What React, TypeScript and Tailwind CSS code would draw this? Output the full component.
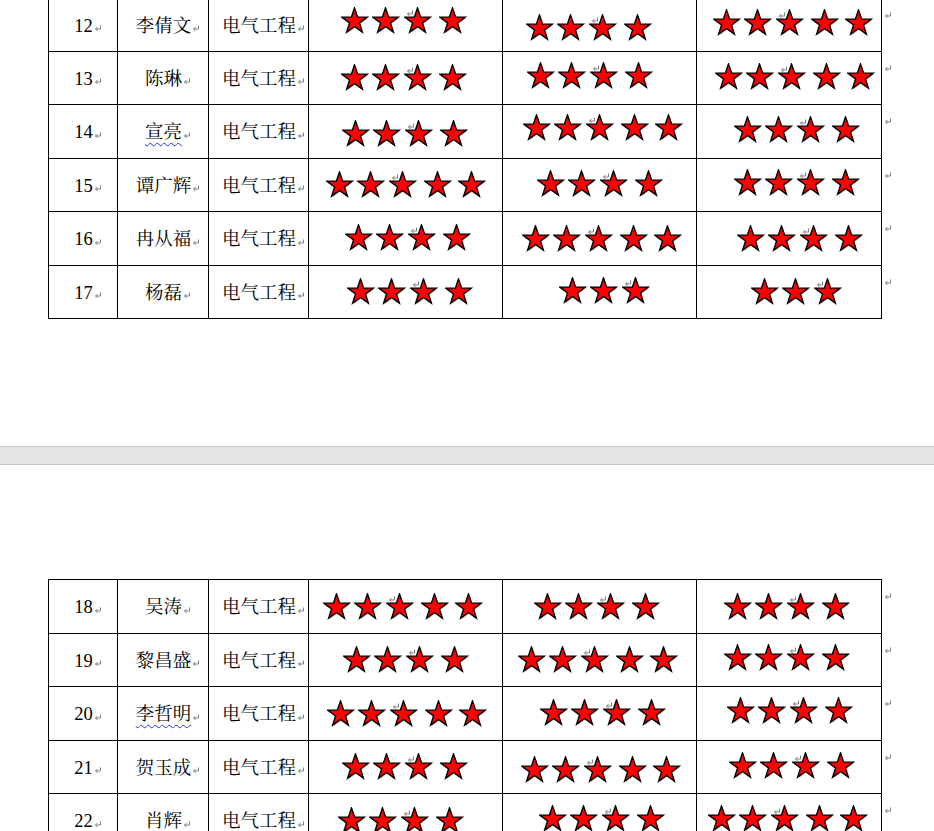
import React from "react";

type StarCell = [number, string, string];
type Row = { no: number; name: string; wavy?: boolean; h: string; cells: StarCell[] };

const TABLE_A: Row[] = [
  { no: 12, name: "李倩文", h: "h-[53px]", cells: [[4, "pl-[32px]", "-mt-[9px]"], [4, "pl-[23px]", "mt-[5px]"], [5, "pl-[16px]", "-mt-[4px]"]] },
  { no: 13, name: "陈琳", h: "h-[53px]", cells: [[4, "pl-[32px]", ""], [4, "pl-[24px]", "-mt-[4px]"], [5, "pl-[18px]", "-mt-[2px]"]] },
  { no: 14, name: "宣亮", wavy: true, h: "h-[54px]", cells: [[4, "pl-[33px]", "mt-[4px]"], [5, "pl-[20px]", "-mt-[8px]"], [4, "pl-[37px]", "-mt-[4px]"]] },
  { no: 15, name: "谭广辉", h: "h-[53px]", cells: [[5, "pl-[17px]", ""], [4, "pl-[34px]", "-mt-[2px]"], [4, "pl-[37px]", "-mt-[4px]"]] },
  { no: 16, name: "冉从福", h: "h-[54px]", cells: [[4, "pl-[36px]", "-mt-[2px]"], [5, "pl-[19px]", ""], [4, "pl-[40px]", ""]] },
  { no: 17, name: "杨磊", h: "h-[53px]", cells: [[4, "pl-[38px]", ""], [3, "pl-[56px]", "-mt-[2px]"], [3, "pl-[54px]", ""]] },
];

const TABLE_B: Row[] = [
  { no: 18, name: "吴涛", h: "h-[54px]", cells: [[5, "pl-[14px]", ""], [4, "pl-[31px]", ""], [4, "pl-[27px]", ""]] },
  { no: 19, name: "黎昌盛", h: "h-[53px]", cells: [[4, "pl-[34px]", ""], [5, "pl-[15px]", ""], [4, "pl-[27px]", "-mt-[4px]"]] },
  { no: 20, name: "李哲明", wavy: true, h: "h-[54px]", cells: [[5, "pl-[18px]", ""], [4, "pl-[37px]", "-mt-[2px]"], [4, "pl-[30px]", "-mt-[6px]"]] },
  { no: 21, name: "贺玉成", h: "h-[53px]", cells: [[4, "pl-[33px]", ""], [5, "pl-[18px]", "mt-[5px]"], [4, "pl-[32px]", "-mt-[2px]"]] },
  { no: 22, name: "肖辉", h: "h-[54px]", cells: [[4, "pl-[29px]", ""], [4, "pl-[36px]", "-mt-[4px]"], [5, "pl-[11px]", "-mt-[4px]"]] },
];

// spacing between stars, same pattern in every cell
const GAPS = ["", "ml-[3px]", "ml-[4px]", "ml-[7px]", "ml-[6px]"];
const STAR_W = ["w-[194px]", "w-[194px]", "w-[185px]"];

function starPoints(cx: number, cy: number, R: number, r: number) {
  const pts: string[] = [];
  for (let i = 0; i < 10; i++) {
    const a = ((-90 + 36 * i) * Math.PI) / 180;
    const rad = i % 2 === 0 ? R : r;
    pts.push(`${(cx + rad * Math.cos(a)).toFixed(2)},${(cy + rad * Math.sin(a)).toFixed(2)}`);
  }
  return pts.join(" ");
}

const PTS = starPoints(13.5, 14.3, 13.4, 5.2);

function Star() {
  return (
    <svg width="28" height="28" viewBox="0 0 28 28" className="block">
      <polygon points={PTS} transform="translate(1 1.2)" fill="#8c8c8c" opacity="0.55" />
      <polygon points={PTS} fill="#ff0000" stroke="#000" strokeWidth="1.4" strokeLinejoin="miter" />
    </svg>
  );
}

function Mark({ className = "" }: { className?: string }) {
  return (
    <svg width="8" height="7" viewBox="0 0 8 7" className={className}>
      <path d="M6.5 0.5V4H1.5M3.5 2L1.5 4L3.5 6" fill="none" stroke="#808080" strokeWidth="1" />
    </svg>
  );
}

function TextCell({ w, children }: { w: string; children: React.ReactNode }) {
  return (
    <div className={`flex items-center justify-center border-r border-black pl-[10px] ${w}`}>
      <span className="mt-[2px] flex items-center whitespace-nowrap text-[18.5px] leading-none text-black">
        {children}
        <Mark className="ml-[1px] mt-[5px]" />
      </span>
    </div>
  );
}

function TableRow({ row }: { row: Row }) {
  return (
    <div className={`relative flex border-b border-black ${row.h}`}>
      <TextCell w="w-[69px]">{row.no}</TextCell>
      <TextCell w="w-[91px]">
        <span className={row.wavy ? "underline decoration-wavy decoration-[#2233ee] decoration-1 underline-offset-[4px]" : ""}>
          {row.name}
        </span>
      </TextCell>
      <TextCell w="w-[100px]">电气工程</TextCell>
      {row.cells.map(([n, pad, mt], ci) => (
        <div key={ci} className={`flex items-center border-r border-black ${STAR_W[ci]} ${pad}`}>
          <div className={`flex ${mt}`}>
            {Array.from({ length: n }).map((_, i) => (
              <div key={i} className={`relative ${GAPS[i]}`}>
                {i === 2 && <Mark className="absolute left-[2px] top-[3px]" />}
                <Star />
              </div>
            ))}
          </div>
        </div>
      ))}
      <Mark className="absolute left-full top-[13px] ml-[2px]" />
    </div>
  );
}

function Table({ rows, className = "" }: { rows: Row[]; className?: string }) {
  return (
    <div className={`ml-[48px] w-[834px] border-l border-t border-black ${className}`}>
      {rows.map((r) => (
        <TableRow key={r.no} row={r} />
      ))}
    </div>
  );
}

export default function App() {
  return (
    <main className="h-[831px] w-[934px] overflow-hidden bg-white font-['Liberation_Serif','Noto_Serif_CJK_SC','Noto_Sans_CJK_SC',serif]">
      <Table rows={TABLE_A} className="-mt-[2px]" />
      {/* page break between the two pages */}
      <div className="mt-[127px] h-[19px] w-full border-y border-[#c8c8c8] bg-[#e4e4e4]" />
      <Table rows={TABLE_B} className="mt-[114px]" />
    </main>
  );
}
